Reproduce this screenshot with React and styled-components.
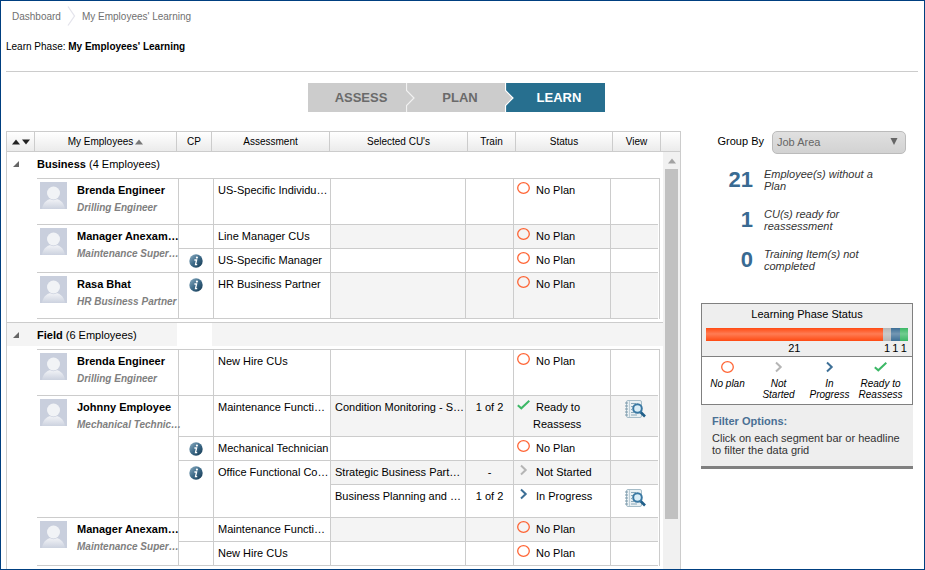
import React from 'react';
import styled, { createGlobalStyle } from 'styled-components';

const GlobalStyle = createGlobalStyle`
* {
  box-sizing: border-box;
}
body {
  margin: 0;
  background: #fff;
  color: #000;
  font-family: "Liberation Sans", Arial, sans-serif;
  font-size: 11px;
}
button {
  padding: 0;
  border: 0;
  background: none;
  font: inherit;
  color: inherit;
  cursor: pointer;
}
svg {
  display: block;
  flex-shrink: 0;
}
`;

const Frame = styled.div`
display: flex;
flex-direction: column;
min-height: 100vh;
padding: 0 6px 0 5px;
border: 1px solid #003f80;
`;

const Breadcrumb = styled.nav`
display: flex;
align-items: center;
gap: 6px;
height: 30px;
padding-left: 6px;
font-size: 10px;
`;

const Crumb = styled.a`
color: #707070;
text-decoration: none;
`;

const PageTitle = styled.h1`
margin: 8px 0 0;
padding-bottom: 16px;
border-bottom: 1px solid #ccc;
font-size: 10px;
font-weight: 400;
line-height: 16px;
`;

const Steps = styled.div`
display: flex;
justify-content: center;
margin: 11px 0 19px;
padding-right: 12px;
`;

const Step = styled.button`
position: relative;
width: 99px;
height: 29px;
padding-left: 8px;
font-size: 13px;
font-weight: 700;
color: ${({ $active }) => ($active ? '#fff' : '#6a6a6a')};
background: ${({ $active }) => ($active ? '#276f8f' : '#ccc')};
`;

const StepArrow = styled.svg`
position: absolute;
left: -1px;
top: 0;
`;

const Content = styled.div`
display: flex;
flex: 1;
gap: 20px;
padding-right: 5px;
`;

const Panel = styled.main`
display: flex;
flex-direction: column;
flex: 1;
min-width: 0;
border: 1px solid #ccc;
border-bottom: 0;
`;

const PanelBody = styled.div`
display: flex;
flex: 1;
`;

const Groups = styled.div`
flex: 1;
min-width: 0;
`;

const Table = styled.table`
width: 100%;
table-layout: fixed;
border-collapse: separate;
border-spacing: 0;
`;

const Col = styled.col`
width: ${({ $width }) => ($width ? `${$width}px` : 'auto')};
`;

const HeadCell = styled.th`
height: 20px;
padding: 0;
border-right: 1px solid #ccc;
border-bottom: 1px solid #ccc;
background: linear-gradient(#fff, #ebebeb);
font-size: 10px;
font-weight: 400;
&:last-child {
  border-right: 0;
}
`;

const HeadLabel = styled.span`
display: flex;
align-items: center;
justify-content: center;
gap: 2px;
`;

const GroupSection = styled.section`
& + & {
  margin-top: 3px;
  border-top: 1px solid #ccc;
}
`;

const GroupRow = styled.div`
display: flex;
gap: 35px;
height: 23px;
margin-bottom: 3px;
`;

const GroupTitle = styled.button`
display: flex;
align-items: center;
width: 170px;
padding-left: 6px;
gap: 17px;
line-height: 22px;
text-align: left;
background: ${({ $shaded }) => ($shaded ? '#f4f4f4' : '#fff')};
`;

const GroupFill = styled.div`
flex: 1;
background: ${({ $shaded }) => ($shaded ? '#f4f4f4' : '#fff')};
`;

const TableBox = styled.div`
margin: 0 3px 0 30px;
padding-right: 1px;
border-top: 1px solid #ccc;
border-right: 1px solid #ccc;
`;

const Cell = styled.td`
padding: 3px 0 3px 4px;
border-right: 1px solid #ccc;
border-bottom: 1px solid #ccc;
line-height: 17px;
text-align: left;
vertical-align: top;
white-space: nowrap;
background: ${({ $shaded }) => ($shaded ? '#f4f4f4' : 'transparent')};
`;

const CenterCell = styled(Cell)`
padding: 3px 0;
text-align: center;
`;

const StatusCell = styled(Cell)`
padding-left: 3px;
white-space: normal;
`;

const ViewCell = styled(CenterCell)`
border-right: 0;
`;

const NameCell = styled(Cell)`
height: 46px;
padding-left: 3px;
font-weight: 400;
`;

const Person = styled.div`
display: flex;
gap: 10px;
`;

const PersonText = styled.div`
min-width: 0;
`;

const PersonName = styled.div`
font-weight: 700;
`;

const PersonRole = styled.div`
font-size: 10px;
font-weight: 700;
font-style: italic;
color: #808080;
`;

const Status = styled.div`
display: flex;
gap: 3px;
`;

const StatusLabel = styled.span`
flex: 1;
text-indent: 3px;
`;

const InfoButton = styled.button`
display: flex;
align-items: center;
justify-content: center;
width: 100%;
height: 17px;
`;

const ViewButton = styled(InfoButton)`
align-items: flex-start;
height: 26px;
`;

const ScrollTrack = styled.div`
display: flex;
flex-direction: column;
align-items: center;
width: 17px;
background: #f1f1f1;
`;

const ScrollArrow = styled.div`
display: flex;
align-items: center;
height: 17px;
`;

const ScrollThumb = styled.div`
flex: 7;
width: 13px;
background: #c1c1c1;
`;

const ScrollRest = styled.div`
flex: 1;
`;

const Sidebar = styled.aside`
width: 212px;
`;

const GroupBy = styled.div`
display: flex;
justify-content: flex-end;
gap: 8px;
padding-right: 7px;
line-height: 20px;
`;

const SelectBox = styled.div`
position: relative;
`;

const Select = styled.select`
display: block;
appearance: none;
width: 134px;
height: 23px;
padding: 0 4px 2px;
border: 1px solid #bbb;
border-radius: 5px;
background: linear-gradient(#e0e0e0, #d2d2d2);
font: inherit;
color: #666;
`;

const SelectArrow = styled.svg`
position: absolute;
right: 8px;
top: 7px;
pointer-events: none;
`;

const Stats = styled.dl`
display: grid;
gap: 16px;
margin: 14px 0 31px;
`;

const Stat = styled.div`
display: grid;
grid-template-columns: 52px 120px;
gap: 11px;
`;

const StatValue = styled.dt`
font-size: 22px;
font-weight: 700;
line-height: 24px;
text-align: right;
color: #396a92;
`;

const StatLabel = styled.dd`
margin: 0;
line-height: 12px;
font-style: italic;
color: #333;
`;

const PhaseCard = styled.section`
border: 1px solid #808080;
`;

const PhaseTop = styled.div`
padding: 0 4px;
border-bottom: 1px solid #808080;
background: #eee;
`;

const PhaseTitle = styled.h2`
margin: 0;
padding-bottom: 4px;
font-size: 11px;
font-weight: 400;
line-height: 20px;
text-align: center;
`;

const Bar = styled.div`
display: flex;
`;

const Segment = styled.button`
flex: ${({ $value }) => $value} 1 0;
min-width: 0;
line-height: 15px;
&::before {
  content: "";
  display: block;
  height: 13px;
  background: linear-gradient(transparent, rgba(255, 255, 255, 0.28) 45%, transparent) ${({ $color }) => $color};
}
`;

const Legend = styled.ul`
display: grid;
grid-template-columns: repeat(4, 1fr);
margin: 0;
padding: 4px 6px 4px 0;
list-style: none;
`;

const LegendItem = styled.li`
display: flex;
flex-direction: column;
align-items: center;
gap: 5px;
padding: 0 2px;
font-size: 10px;
font-style: italic;
line-height: 11px;
text-align: center;
`;

const FilterBox = styled.section`
padding: 10px 11px;
border-bottom: 3px solid #808080;
background: #eee;
line-height: 12px;
color: #333;
`;

const FilterTitle = styled.h2`
margin: 0 0 5px;
font-size: 11px;
color: #4a7094;
`;

const FilterText = styled.p`
margin: 0;
`;

const HEAD_COLS = [28, 142, 35, 118, null, 48, 97, 48, 19];
const BODY_COLS = [142, 35, 117, null, 48, 97, 47];

const STATUSES = {
  none: { label: 'No Plan', legend: 'No plan', color: '#ff4a12', value: 21 },
  notStarted: { label: 'Not Started', legend: 'Not Started', color: '#b5b5b5', value: 1 },
  progress: { label: 'In Progress', legend: 'In Progress', color: '#3d6f96', value: 1 },
  ready: { label: 'Ready to Reassess', legend: 'Ready to Reassess', color: '#3cb866', value: 1 },
};

const GROUPS = [
  {
    name: 'Business',
    count: 4,
    employees: [
      {
        name: 'Brenda Engineer',
        role: 'Drilling Engineer',
        assessments: [{ name: 'US-Specific Individu…', units: [{ status: 'none' }] }],
      },
      {
        name: 'Manager Anexam…',
        role: 'Maintenance Super…',
        assessments: [
          { name: 'Line Manager CUs', units: [{ status: 'none' }] },
          { name: 'US-Specific Manager', info: true, units: [{ status: 'none' }] },
        ],
      },
      {
        name: 'Rasa Bhat',
        role: 'HR Business Partner',
        assessments: [{ name: 'HR Business Partner', info: true, units: [{ status: 'none' }] }],
      },
    ],
  },
  {
    name: 'Field',
    count: 6,
    employees: [
      {
        name: 'Brenda Engineer',
        role: 'Drilling Engineer',
        assessments: [{ name: 'New Hire CUs', units: [{ status: 'none' }] }],
      },
      {
        name: 'Johnny Employee',
        role: 'Mechanical Technic…',
        assessments: [
          {
            name: 'Maintenance Functi…',
            units: [{ name: 'Condition Monitoring - S…', train: '1 of 2', status: 'ready', view: true }],
          },
          { name: 'Mechanical Technician', info: true, units: [{ status: 'none' }] },
          {
            name: 'Office Functional Co…',
            info: true,
            units: [
              { name: 'Strategic Business Part…', train: '-', status: 'notStarted' },
              { name: 'Business Planning and …', train: '1 of 2', status: 'progress', view: true },
            ],
          },
        ],
      },
      {
        name: 'Manager Anexam…',
        role: 'Maintenance Super…',
        assessments: [
          { name: 'Maintenance Functi…', units: [{ status: 'none' }] },
          { name: 'New Hire CUs', units: [{ status: 'none' }] },
        ],
      },
    ],
  },
];

const STATS = [
  { value: 21, label: 'Employee(s) without a Plan' },
  { value: 1, label: 'CU(s) ready for reassessment' },
  { value: 0, label: 'Training Item(s) not completed' },
];

const StatusIcon = ({ status }) => {
  const { color } = STATUSES[status];
  return (
    <svg width="13" height="12" viewBox="0 0 13 12" fill="none" stroke={color} aria-hidden="true">
      {status === 'none' && <ellipse cx="6.5" cy="6" rx="5.8" ry="5.3" strokeWidth="1.3" strokeOpacity="0.85" />}
      {(status === 'notStarted' || status === 'progress') && <path d="M4 1.5 L8.7 6 L4 10.5" strokeWidth="2" />}
      {status === 'ready' && <path d="M0.8 6.2 L4.3 9.3 L12.3 1.8" strokeWidth="2" />}
    </svg>
  );
};

const Avatar = () => (
  <svg width="27" height="27" viewBox="0 0 27 27" aria-hidden="true">
    <defs>
      <linearGradient id="shoulders" x1="0" y1="0" x2="0" y2="1">
        <stop offset="0" stopColor="#f4f5f8" />
        <stop offset="1" stopColor="#ccd2df" />
      </linearGradient>
    </defs>
    <rect width="27" height="27" fill="#c9cfdd" />
    <path d="M2 27 C3 20 8 16.5 13.5 16.5 C19 16.5 24 20 25 27 Z" fill="url(#shoulders)" />
    <circle cx="13.5" cy="11" r="7.2" fill="#c9cfdd" />
    <circle cx="13.5" cy="11" r="6.5" fill="#f1f3f6" />
  </svg>
);

const InfoIcon = () => (
  <svg width="14" height="14" viewBox="0 0 14 14" aria-hidden="true">
    <defs>
      <linearGradient id="info" x1="0" y1="0" x2="1" y2="1">
        <stop offset="0" stopColor="#8fb0c4" />
        <stop offset="0.5" stopColor="#3d6a88" />
        <stop offset="1" stopColor="#12364f" />
      </linearGradient>
    </defs>
    <circle cx="7" cy="7" r="6.7" fill="url(#info)" />
    <circle cx="7.9" cy="3.6" r="1.1" fill="#fff" />
    <path d="M5.4 6 H7.6 L6.5 10.6 H8.2" fill="none" stroke="#fff" strokeWidth="1.3" />
  </svg>
);

const ViewIcon = () => (
  <svg width="22" height="20" viewBox="0 0 22 20" fill="none" aria-hidden="true">
    <rect x="2.5" y="1.5" width="15" height="17" rx="1.5" fill="#e9f0f3" stroke="#a5bcc8" />
    <path d="M5.5 2 V18" stroke="#bccdd6" />
    <path d="M1 4 H4 M1 7 H4 M1 10 H4 M1 13 H4 M1 16 H4" stroke="#7896a8" />
    <path d="M7 4.5 H12 M7 7.5 H9 M7 10.5 H8 M7 13.5 H10 M7 16 H13" stroke="#8aa9ba" />
    <path d="M16.5 13 L21 17.5" stroke="#215f89" strokeWidth="2.6" />
    <circle cx="13.5" cy="9.5" r="4.3" fill="#d9edf7" stroke="#3877a2" strokeWidth="2" />
  </svg>
);

const Triangle = ({ down, color = '#222' }) => (
  <svg width="8" height="6" viewBox="0 0 8 6" aria-hidden="true">
    <path d={down ? 'M0 0.5 H8 L4 5.5 Z' : 'M0 5.5 H8 L4 0.5 Z'} fill={color} />
  </svg>
);

const Columns = ({ widths }) => (
  <colgroup>
    {widths.map((width, i) => (
      <Col key={i} $width={width} />
    ))}
  </colgroup>
);

// one table row per selected unit, carrying the cells that span the rows below
const toRows = (employees) => {
  const rows = [];
  employees.forEach((employee) => {
    const span = employee.assessments.reduce((sum, item) => sum + item.units.length, 0);
    employee.assessments.forEach((assessment, a) => {
      assessment.units.forEach((unit, u) => {
        rows.push({
          unit,
          employee: a === 0 && u === 0 ? employee : null,
          assessment: u === 0 ? assessment : null,
          span,
        });
      });
    });
  });
  return rows;
};

const EmployeeTable = ({ group }) => (
  <TableBox>
    <Table aria-label={group.name}>
      <Columns widths={BODY_COLS} />
      <tbody>
        {toRows(group.employees).map(({ unit, employee, assessment, span }, i) => {
          const shaded = i % 2 === 1;
          return (
            <tr key={i}>
              {employee && (
                <NameCell as="th" scope="rowgroup" rowSpan={span}>
                  <Person>
                    <Avatar />
                    <PersonText>
                      <PersonName>{employee.name}</PersonName>
                      <PersonRole>{employee.role}</PersonRole>
                    </PersonText>
                  </Person>
                </NameCell>
              )}
              {assessment && (
                <>
                  <CenterCell rowSpan={assessment.units.length}>
                    {assessment.info && (
                      <InfoButton aria-label="Competency profile">
                        <InfoIcon />
                      </InfoButton>
                    )}
                  </CenterCell>
                  <Cell rowSpan={assessment.units.length}>{assessment.name}</Cell>
                </>
              )}
              <Cell $shaded={shaded}>{unit.name}</Cell>
              <CenterCell $shaded={shaded}>{unit.train}</CenterCell>
              <StatusCell $shaded={shaded}>
                <Status>
                  <StatusIcon status={unit.status} />
                  <StatusLabel>{STATUSES[unit.status].label}</StatusLabel>
                </Status>
              </StatusCell>
              <ViewCell $shaded={shaded}>
                {unit.view && (
                  <ViewButton aria-label="View">
                    <ViewIcon />
                  </ViewButton>
                )}
              </ViewCell>
            </tr>
          );
        })}
      </tbody>
    </Table>
  </TableBox>
);

const Group = ({ group, shaded }) => (
  <GroupSection>
    <GroupRow>
      <GroupTitle $shaded={shaded}>
        <svg width="7" height="6" viewBox="0 0 7 6" aria-hidden="true">
          <path d="M6 0 V6 H0 Z" fill="#666" />
        </svg>
        <span>
          <b>{group.name}</b> ({group.count} Employees)
        </span>
      </GroupTitle>
      <GroupFill $shaded={shaded} />
    </GroupRow>
    <EmployeeTable group={group} />
  </GroupSection>
);

const StepDivider = ({ stroke }) => (
  <StepArrow width="10" height="29" viewBox="0 0 10 29" aria-hidden="true">
    <path d="M0 0 H0.5 V7.5 L8 15 L0.5 22.5 V29 H0 Z" fill="#ccc" />
    <path d="M0.5 0 V7.5 L8 15 L0.5 22.5 V29" fill="none" stroke={stroke} strokeWidth="1.2" />
  </StepArrow>
);

const App = () => {
  return (
    <Frame>
      <GlobalStyle />
      <Breadcrumb>
        <Crumb href="#dashboard">Dashboard</Crumb>
        <svg width="9" height="20" viewBox="0 0 9 20" fill="none" aria-hidden="true">
          <path d="M1 0.5 L7.5 10 L1 19.5" stroke="#e4e4ec" strokeWidth="1.3" />
        </svg>
        <Crumb href="#learning">My Employees' Learning</Crumb>
      </Breadcrumb>
      <PageTitle>
        Learn Phase: <b>My Employees' Learning</b>
      </PageTitle>
      <Steps>
        <Step>ASSESS</Step>
        <Step>
          <StepDivider stroke="#f2f2f2" />
          PLAN
        </Step>
        <Step $active>
          <StepDivider stroke="#fff" />
          LEARN
        </Step>
      </Steps>
      <Content>
        <Panel>
          <Table>
            <Columns widths={HEAD_COLS} />
            <thead>
              <tr>
                <HeadCell scope="col" aria-label="Expand or collapse">
                  <HeadLabel>
                    <Triangle />
                    <Triangle down />
                  </HeadLabel>
                </HeadCell>
                <HeadCell scope="col">
                  <HeadLabel>
                    My Employees
                    <Triangle color="#777" />
                  </HeadLabel>
                </HeadCell>
                <HeadCell scope="col">CP</HeadCell>
                <HeadCell scope="col">Assessment</HeadCell>
                <HeadCell scope="col">Selected CU's</HeadCell>
                <HeadCell scope="col">Train</HeadCell>
                <HeadCell scope="col">Status</HeadCell>
                <HeadCell scope="col">View</HeadCell>
                <HeadCell as="td" />
              </tr>
            </thead>
          </Table>
          <PanelBody>
            <Groups>
              {GROUPS.map((group, i) => (
                <Group key={group.name} group={group} shaded={i % 2 === 1} />
              ))}
            </Groups>
            <ScrollTrack aria-hidden="true">
              <ScrollArrow>
                <Triangle color="#a3a3a3" />
              </ScrollArrow>
              <ScrollThumb />
              <ScrollRest />
            </ScrollTrack>
          </PanelBody>
        </Panel>
        <Sidebar>
          <GroupBy>
            <label htmlFor="group-by">Group By</label>
            <SelectBox>
              <Select id="group-by" defaultValue="area">
                <option value="area">Job Area</option>
              </Select>
              <SelectArrow width="8" height="7" viewBox="0 0 8 7" aria-hidden="true">
                <path d="M0.5 0 H7.5 L4 7 Z" fill="#666" />
              </SelectArrow>
            </SelectBox>
          </GroupBy>
          <Stats>
            {STATS.map((stat) => (
              <Stat key={stat.label}>
                <StatValue>{stat.value}</StatValue>
                <StatLabel>{stat.label}</StatLabel>
              </Stat>
            ))}
          </Stats>
          <PhaseCard>
            <PhaseTop>
              <PhaseTitle>Learning Phase Status</PhaseTitle>
              <Bar>
                {Object.entries(STATUSES).map(([key, { value, color, label }]) => (
                  <Segment key={key} $value={value} $color={color} title={label}>
                    {value}
                  </Segment>
                ))}
              </Bar>
            </PhaseTop>
            <Legend>
              {Object.entries(STATUSES).map(([key, { legend }]) => (
                <LegendItem key={key}>
                  <StatusIcon status={key} />
                  {legend}
                </LegendItem>
              ))}
            </Legend>
          </PhaseCard>
          <FilterBox>
            <FilterTitle>Filter Options:</FilterTitle>
            <FilterText>Click on each segment bar or headline to filter the data grid</FilterText>
          </FilterBox>
        </Sidebar>
      </Content>
    </Frame>
  );
};

export default App;
